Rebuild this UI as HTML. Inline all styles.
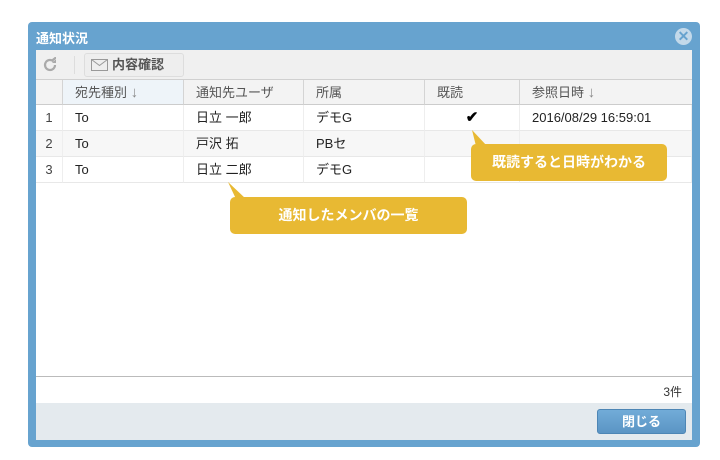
<!DOCTYPE html>
<html><head><meta charset="utf-8"><style>
*{margin:0;padding:0;box-sizing:border-box}
body{width:720px;height:460px;background:#fff;font-family:"Liberation Sans","Noto Sans CJK JP",sans-serif;position:relative;overflow:hidden}
.dlg{position:absolute;left:28px;top:22px;width:672px;height:425px;background:#67a3cf;border-radius:4px}
.title{position:absolute;left:8px;top:6px;color:#fff;font-size:13px;font-weight:bold}
.close{position:absolute;right:8px;top:6px;width:17px;height:17px;border-radius:50%;background:#c3d9ea;color:#67a3cf;font-size:14px;line-height:17px;text-align:center;font-weight:bold}
.body{position:absolute;left:8px;top:28px;width:656px;height:390px;background:#fff}
.tb{position:absolute;left:0;top:0;width:656px;height:30px;background:#f0f0f0;border-bottom:1px solid #d0d0d0}
.btn{position:absolute;left:48px;top:3px;width:100px;height:24px;border:1px solid #ddd;border-radius:3px;background:#eee;font-size:13px;font-weight:bold;color:#555;line-height:22px;padding-left:27px}
.hd{position:absolute;top:30px;height:25px;border-right:1px solid #d4d4d4;border-bottom:1px solid #ccc;background:#f3f3f3;font-size:13px;color:#555;line-height:25px;padding-left:12px}
.ar{color:#888;font-weight:bold;font-size:15px}
.c{position:absolute;height:26px;border-right:1px solid #eee;border-bottom:1px solid #e8e8e8;font-size:13px;color:#222;line-height:26px;padding-left:12px}
.n{color:#444}
.tip{position:absolute;background:#e8b933;color:#fff;font-weight:bold;font-size:14px;border-radius:5px;text-align:center}
</style></head><body>
<div class="dlg">
<div class="title">通知状況</div>
<div class="close">✕</div>
<div class="body">
<div class="tb">
<svg style="position:absolute;left:6px;top:7px" width="16" height="16" viewBox="0 0 16 16"><path d="M13 8a5 5 0 1 1-1.5-3.6" fill="none" stroke="#aaa" stroke-width="2.2"/><path d="M9 3h5V-1z M14 2v4h-4z" fill="#aaa"/></svg>
<div style="position:absolute;left:38px;top:6px;width:1px;height:18px;background:#ddd"></div>
<div class="btn"><svg style="position:absolute;left:6px;top:5px" width="17" height="12" viewBox="0 0 17 12"><rect x=".5" y=".5" width="16" height="11" fill="none" stroke="#999"/><path d="M.5 .5l8 6 8-6" fill="none" stroke="#999"/></svg>内容確認</div>
</div>
<div class="hd" style="left:0;width:27px;padding:0"></div>
<div class="hd" style="left:27px;width:121px;background:#eef4f9">宛先種別 <span class="ar">↓</span></div>
<div class="hd" style="left:148px;width:120px">通知先ユーザ</div>
<div class="hd" style="left:268px;width:121px">所属</div>
<div class="hd" style="left:389px;width:95px">既読</div>
<div class="hd" style="left:484px;width:172px;border-right:0">参照日時 <span class="ar">↓</span></div>

<div class="c n" style="left:0;top:55px;width:27px;text-align:center;padding:0">1</div>
<div class="c" style="left:27px;top:55px;width:121px">To</div>
<div class="c" style="left:148px;top:55px;width:120px">日立 一郎</div>
<div class="c" style="left:268px;top:55px;width:121px">デモG</div>
<div class="c" style="left:389px;top:55px;width:95px;text-align:center;font-size:15px;font-weight:bold;padding:0;color:#000">✔</div>
<div class="c" style="left:484px;top:55px;width:172px">2016/08/29 16:59:01</div>

<div class="c n" style="left:0;top:81px;width:27px;text-align:center;padding:0;background:#f7f7f7">2</div>
<div class="c" style="left:27px;top:81px;width:121px;background:#f7f7f7">To</div>
<div class="c" style="left:148px;top:81px;width:120px;background:#f7f7f7">戸沢 拓</div>
<div class="c" style="left:268px;top:81px;width:121px;background:#f7f7f7">PBセ</div>
<div class="c" style="left:389px;top:81px;width:95px;background:#f7f7f7"></div>
<div class="c" style="left:484px;top:81px;width:172px;background:#f7f7f7"></div>

<div class="c n" style="left:0;top:107px;width:27px;text-align:center;padding:0">3</div>
<div class="c" style="left:27px;top:107px;width:121px">To</div>
<div class="c" style="left:148px;top:107px;width:120px">日立 二郎</div>
<div class="c" style="left:268px;top:107px;width:121px">デモG</div>
<div class="c" style="left:389px;top:107px;width:95px"></div>
<div class="c" style="left:484px;top:107px;width:172px"></div>

<div style="position:absolute;left:0;top:326px;width:656px;height:1px;background:#bbb"></div>
<div style="position:absolute;right:10px;top:333px;font-size:12px;color:#333">3件</div>
<div style="position:absolute;left:0;top:353px;width:656px;height:37px;background:#e4eaee"></div>
<div style="position:absolute;left:561px;top:359px;width:89px;height:25px;border:1px solid #4d86b5;border-radius:3px;background:linear-gradient(#72acd8,#5b95c4);color:#fff;font-size:13px;font-weight:bold;text-align:center;line-height:23px">閉じる</div>
</div>
</div>
<svg style="position:absolute;left:0;top:0" width="720" height="460"><path d="M472 130L487 146H476z" fill="#e8b933"/><path d="M228 182L246 199H236z" fill="#e8b933"/></svg>
<div class="tip" style="left:471px;top:144px;width:196px;height:37px;line-height:37px">既読すると日時がわかる</div>
<div class="tip" style="left:230px;top:197px;width:237px;height:37px;line-height:37px">通知したメンバの一覧</div>
</body></html>
